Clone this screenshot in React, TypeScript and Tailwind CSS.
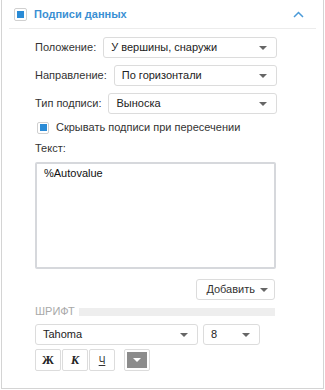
import React from "react";

const Tri = ({ color = "#666" }: { color?: string }) => (
  <svg width="8" height="4" viewBox="0 0 8 4" className="shrink-0">
    <path d="M0 0 H8 L4 4 Z" fill={color} />
  </svg>
);

const Select = ({ text, className = "" }: { text: string; className?: string }) => (
  <div
    className={`flex h-[21px] items-center justify-between rounded-[3px] border border-[#dcdcdc] bg-white pl-[7px] pr-[9px] text-[11px] text-[#222] ${className}`}
  >
    <span>{text}</span>
    <Tri />
  </div>
);

export default function App() {
  return (
    <div
      className="h-[390px] w-[325px] bg-white"
      style={{ fontFamily: '"Liberation Sans", Arial, sans-serif' }}
    >
      <div className="ml-[1px] flex h-[389px] w-[323px] flex-col border-x border-b border-[#d4d4d4]">
        {/* header */}
        <div className="mx-[7px] flex h-[29px] items-center border-b border-[#ececec] pl-[5px] pr-[12px]">
          <div className="flex h-[13px] w-[13px] items-center justify-center rounded-[2px] border border-[#d0d0d0] bg-white">
            <div className="h-[7px] w-[7px] bg-[#2a8bd6]" />
          </div>
          <span className="ml-[7px] text-[11px] font-bold text-[#3a8fd3]">Подписи данных</span>
          <svg width="11" height="7" viewBox="0 0 11 7" className="ml-auto">
            <path d="M1 6 L5.5 1.5 L10 6" fill="none" stroke="#4a9ad8" strokeWidth="1.5" />
          </svg>
        </div>

        {/* content */}
        <div className="flex flex-col pl-[33px] pr-[46px] pt-[8px] text-[11px] text-[#333]">
          <div className="flex items-center gap-[7px]">
            <span>Положение:</span>
            <Select text="У вершины, снаружи" className="flex-1" />
          </div>
          <div className="mt-[7px] flex items-center gap-[7px]">
            <span>Направление:</span>
            <Select text="По горизонтали" className="flex-1" />
          </div>
          <div className="mt-[7px] flex items-center gap-[7px]">
            <span>Тип подписи:</span>
            <Select text="Выноска" className="flex-1" />
          </div>
          <div className="mt-[7px] flex h-[13px] items-center">
            <div className="ml-[2px] flex h-[12px] w-[12px] items-center justify-center rounded-[2px] border border-[#d0d0d0] bg-white">
              <div className="h-[7px] w-[7px] bg-[#2a8bd6]" />
            </div>
            <span className="ml-[7px]">Скрывать подписи при пересечении</span>
          </div>
          <div className="mt-[8px] h-[13px] leading-[13px]">Текст:</div>
          <div className="mt-[7px] h-[107px] w-[241px] rounded-[2px] border-2 border-[#d6d8dc] px-[7px] pt-[1px] text-[11px] text-[#111]">
            %Autovalue
          </div>
          <div className="mt-[10px] flex w-[240px] justify-end">
            <div className="flex h-[21px] w-[79px] items-center justify-end gap-[5px] rounded-[3px] border border-[#dcdcdc] pr-[6px] text-[11px] text-[#333]">
              <span>Добавить</span>
              <Tri />
            </div>
          </div>
          <div className="mt-[5px] flex h-[13px] w-[240px] items-center">
            <span className="text-[11px] text-[#a8a8a8]">ШРИФТ</span>
            <div className="ml-[4px] h-[8px] flex-1 bg-[#eeeeee]" />
          </div>
          <div className="mt-[6px] flex gap-[5px]">
            <Select text="Tahoma" className="w-[163px]" />
            <Select text="8" className="w-[57px]" />
          </div>
          <div className="mt-[4px] flex items-center">
            <div
              className="flex h-[22px] w-[26px] items-center justify-center rounded-[2px] border border-[#dcdcdc] text-[12px] font-bold text-[#222]"
              style={{ fontFamily: '"Liberation Serif", "Times New Roman", serif' }}
            >
              Ж
            </div>
            <div
              className="ml-[1px] flex h-[22px] w-[26px] items-center justify-center rounded-[2px] border border-[#dcdcdc] text-[12px] font-bold italic text-[#222]"
              style={{ fontFamily: '"Liberation Serif", "Times New Roman", serif' }}
            >
              К
            </div>
            <div className="ml-[1px] flex h-[22px] w-[26px] items-center justify-center rounded-[2px] border border-[#dcdcdc] text-[10px] text-[#333] underline">
              Ч
            </div>
            <div className="ml-[9px] flex h-[22px] w-[26px] items-center justify-center rounded-[2px] border border-[#dcdcdc] p-[2px]">
              <div className="flex h-full w-full items-center justify-center bg-[#8c8c8c]">
                <Tri color="#ffffff" />
              </div>
            </div>
          </div>
        </div>
      </div>
    </div>
  );
}
